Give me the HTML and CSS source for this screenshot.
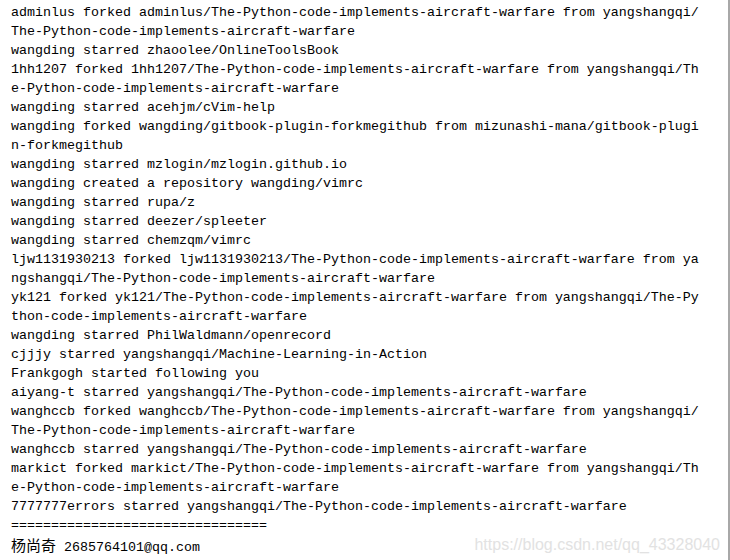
FILE: index.html
```html
<!DOCTYPE html>
<html lang="zh-CN">
<head>
<meta charset="utf-8">
<title>console</title>
<link rel="stylesheet" href="styles.css">
</head>
<body>
<div class="console">
<pre class="output">adminlus forked adminlus/The-Python-code-implements-aircraft-warfare from yangshangqi/
The-Python-code-implements-aircraft-warfare
wangding starred zhaoolee/OnlineToolsBook
1hh1207 forked 1hh1207/The-Python-code-implements-aircraft-warfare from yangshangqi/Th
e-Python-code-implements-aircraft-warfare
wangding starred acehjm/cVim-help
wangding forked wangding/gitbook-plugin-forkmegithub from mizunashi-mana/gitbook-plugi
n-forkmegithub
wangding starred mzlogin/mzlogin.github.io
wangding created a repository wangding/vimrc
wangding starred rupa/z
wangding starred deezer/spleeter
wangding starred chemzqm/vimrc
ljw1131930213 forked ljw1131930213/The-Python-code-implements-aircraft-warfare from ya
ngshangqi/The-Python-code-implements-aircraft-warfare
yk121 forked yk121/The-Python-code-implements-aircraft-warfare from yangshangqi/The-Py
thon-code-implements-aircraft-warfare
wangding starred PhilWaldmann/openrecord
cjjjy starred yangshangqi/Machine-Learning-in-Action
Frankgogh started following you
aiyang-t starred yangshangqi/The-Python-code-implements-aircraft-warfare
wanghccb forked wanghccb/The-Python-code-implements-aircraft-warfare from yangshangqi/
The-Python-code-implements-aircraft-warfare
wanghccb starred yangshangqi/The-Python-code-implements-aircraft-warfare
markict forked markict/The-Python-code-implements-aircraft-warfare from yangshangqi/Th
e-Python-code-implements-aircraft-warfare
7777777errors starred yangshangqi/The-Python-code-implements-aircraft-warfare
================================
<span class="cjk">杨尚奇</span> 2685764101@qq.com</pre>
<div class="watermark">https://blog.csdn.net/qq_43328040</div>
</div>
</body>
</html>
```
FILE: styles.css
```css
html, body {
  margin: 0;
  padding: 0;
  background: #ffffff;
}
.console {
  position: relative;
  width: 728px;
  height: 560px;
  border-right: 2px solid #a8a8a8;
  overflow: hidden;
}
.output {
  margin: 0;
  padding: 3px 0 0 11px;
  font-family: "Liberation Mono", "DejaVu Sans Mono", monospace;
  font-size: 13.33px;
  line-height: 19px;
  color: #000000;
  white-space: pre;
}
.cjk {
  font-family: "Noto Sans CJK SC", sans-serif;
  font-size: 15px;
}
.watermark {
  position: absolute;
  right: 8px;
  bottom: 6px;
  font-family: "Liberation Sans", Arial, sans-serif;
  font-size: 16px;
  color: #e2e2e2;
}
```
